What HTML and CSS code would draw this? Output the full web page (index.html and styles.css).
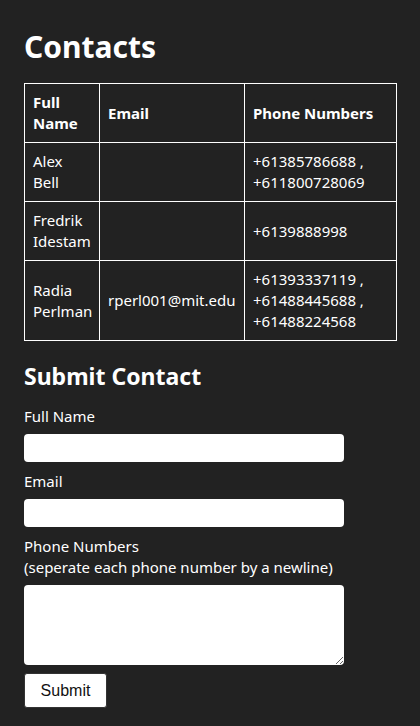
FILE: index.html
```html
<!DOCTYPE html>
<html lang="en">
<head>
<meta charset="utf-8">
<title>Contacts</title>
<link rel="stylesheet" href="styles.css">
</head>
<body>
<main class="page">
  <h1 class="title">Contacts</h1>
  <table class="contacts">
    <colgroup>
      <col class="col-name">
      <col class="col-email">
      <col class="col-phone">
    </colgroup>
    <thead>
      <tr><th>Full Name</th><th>Email</th><th>Phone Numbers</th></tr>
    </thead>
    <tbody>
      <tr><td>Alex Bell</td><td></td><td>+61385786688 , +611800728069</td></tr>
      <tr><td>Fredrik Idestam</td><td></td><td>+6139888998</td></tr>
      <tr><td>Radia Perlman</td><td>rperl001@mit.edu</td><td>+61393337119 , +61488445688 , +61488224568</td></tr>
    </tbody>
  </table>
  <h2 class="subtitle">Submit Contact</h2>
  <form class="form">
    <label class="label" for="name">Full Name</label>
    <input class="field" id="name" type="text">
    <label class="label" for="email">Email</label>
    <input class="field" id="email" type="email">
    <label class="label" for="phones">Phone Numbers<br>(seperate each phone number by a newline)</label>
    <textarea class="field area" id="phones"></textarea>
    <button class="submit" type="button">Submit</button>
  </form>
</main>
</body>
</html>
```
FILE: styles.css
```css
html, body {
  margin: 0;
  padding: 0;
  background: #222222;
}
body {
  color: #ffffff;
  font-family: "Noto Sans", "Open Sans", sans-serif;
  font-size: 15px;
  line-height: 21px;
}
.page {
  padding: 25px 24px 0;
}
.title {
  margin: 0 0 15px;
  font-size: 30px;
  line-height: 43px;
  font-weight: 700;
}
.contacts {
  width: 372px;
  border-collapse: collapse;
  table-layout: fixed;
}
.col-name { width: 75px; }
.col-email { width: 145px; }
.col-phone { width: 152px; }
.contacts th,
.contacts td {
  border: 1px solid #ffffff;
  padding: 8px;
  text-align: left;
  vertical-align: middle;
}
.contacts th {
  font-weight: 700;
}
.subtitle {
  margin: 19px 0 14px;
  font-size: 23px;
  line-height: 32px;
  font-weight: 700;
}
.form {
  display: flex;
  flex-direction: column;
  align-items: flex-start;
}
.label {
  display: block;
  margin-bottom: 7px;
}
.field {
  box-sizing: border-box;
  width: 320px;
  height: 28px;
  margin: 0 0 9px;
  border: none;
  border-radius: 4px;
  background: #ffffff;
}
.area {
  height: 80px;
  margin-bottom: 8px;
}
.submit {
  width: 83px;
  height: 35px;
  background: #ffffff;
  color: #111111;
  border: 1px solid #333333;
  border-radius: 3px;
  font-family: "Liberation Sans", Arial, sans-serif;
  font-size: 16px;
}
```
